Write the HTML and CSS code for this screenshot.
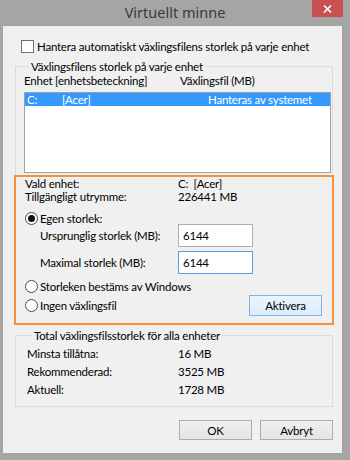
FILE: index.html
```html
<!DOCTYPE html>
<html lang="sv">
<head>
    <meta charset="UTF-8">
    <title>Virtuellt minne</title>
    <link rel="stylesheet" href="styles.css">
</head>
<body>
    <div class="window">
        <div class="titlebar">
            <span class="title">Virtuellt minne</span>
            <button class="close" aria-label="Stäng">
                <svg width="9" height="8" viewBox="0 0 9 8"><path d="M1 0.5 L8 7.5 M8 0.5 L1 7.5" stroke="#fff" stroke-width="1.6"/></svg>
            </button>
        </div>

        <div class="client">
            <label class="check-row">
                <span class="checkbox"></span>
                Hantera automatiskt växlingsfilens storlek på varje enhet
            </label>

            <fieldset class="group group-drives">
                <legend>Växlingsfilens storlek på varje enhet</legend>
                <div class="list-head">
                    <span class="col-drive">Enhet [enhetsbeteckning]</span>
                    <span>Växlingsfil (MB)</span>
                </div>
                <div class="listbox">
                    <div class="list-row selected">
                        <span class="col-letter">C:</span>
                        <span class="col-name">[Acer]</span>
                        <span>Hanteras av systemet</span>
                    </div>
                </div>
            </fieldset>

            <div class="focus-box">
                <div class="info-row first">
                    <span class="info-label">Vald enhet:</span>
                    <span>C:&nbsp; [Acer]</span>
                </div>
                <div class="info-row">
                    <span class="info-label">Tillgängligt utrymme:</span>
                    <span>226441 MB</span>
                </div>

                <label class="radio-row custom">
                    <span class="radio checked"></span>
                    Egen storlek:
                </label>
                <div class="field-row">
                    <span class="field-label">Ursprunglig storlek (MB):</span>
                    <span class="textbox">6144</span>
                </div>
                <div class="field-row second">
                    <span class="field-label">Maximal storlek (MB):</span>
                    <span class="textbox focused">6144</span>
                </div>

                <div class="options">
                    <div class="option-list">
                        <label class="radio-row">
                            <span class="radio"></span>
                            Storleken bestäms av Windows
                        </label>
                        <label class="radio-row">
                            <span class="radio"></span>
                            Ingen växlingsfil
                        </label>
                    </div>
                    <button class="btn btn-default">Aktivera</button>
                </div>
            </div>

            <fieldset class="group group-total">
                <legend>Total växlingsfilsstorlek för alla enheter</legend>
                <div class="total-row">
                    <span class="info-label">Minsta tillåtna:</span>
                    <span>16 MB</span>
                </div>
                <div class="total-row">
                    <span class="info-label">Rekommenderad:</span>
                    <span>3525 MB</span>
                </div>
                <div class="total-row">
                    <span class="info-label">Aktuell:</span>
                    <span>1728 MB</span>
                </div>
            </fieldset>

            <div class="dialog-buttons">
                <button class="btn">OK</button>
                <button class="btn">Avbryt</button>
            </div>
        </div>
    </div>
</body>
</html>
```

FILE: styles.css
```css
body {
    margin: 0;
    width: 350px;
    height: 460px;
    overflow: hidden;
    background-color: #a5a5a5;
    font-family: Lato, "Noto Sans", sans-serif;
    font-size: 11.5px;
    letter-spacing: -0.22px;
    color: #000;
}

.window {
    display: flex;
    flex-direction: column;
    height: 460px;
}

.titlebar {
    position: relative;
    height: 26px;
    text-align: center;
}

.title {
    display: inline-block;
    margin-top: 2px;
    font-family: "Noto Sans", sans-serif;
    font-size: 14.5px;
    letter-spacing: 0;
    line-height: 20px;
    color: #3a3a3a;
}

.close {
    position: absolute;
    top: 0;
    right: 7px;
    width: 31px;
    height: 17px;
    padding: 0;
    border: none;
    background-color: #c75050;
    display: flex;
    align-items: center;
    justify-content: center;
}

.client {
    height: 427px;
    margin: 0 8px 0 3px;
    padding: 0 9px 0 12px;
    background-color: #f0f0f0;
    box-sizing: border-box;
}

/* checkbox + radios */
.check-row {
    display: flex;
    align-items: center;
    gap: 3px;
    height: 13px;
    margin: 14px 0 0 6px;
    white-space: nowrap;
}

.checkbox {
    width: 11px;
    height: 11px;
    border: 1px solid #707070;
    background-color: #fff;
}

.radio-row {
    display: flex;
    align-items: center;
    gap: 2px;
    height: 13px;
    padding-left: 9px;
    white-space: nowrap;
}

.radio {
    position: relative;
    width: 11px;
    height: 11px;
    border: 1px solid #4a4a4a;
    border-radius: 50%;
    background-color: #fff;
}

.radio.checked::after {
    content: "";
    position: absolute;
    left: 2px;
    top: 2px;
    width: 7px;
    height: 7px;
    border-radius: 50%;
    background-color: #111;
}

/* group boxes */
.group {
    margin: 0;
    min-inline-size: 0;
    border: 1px solid #dcdcdc;
}

.group legend {
    margin-left: 5px;
    padding: 0 2px;
    line-height: 15px;
}

.group-drives {
    margin-top: 6px;
    padding: 0 1px 2px 8px;
    border-bottom: none;
}

.list-head {
    display: flex;
    height: 14px;
    line-height: 14px;
}

.col-drive {
    width: 156px;
}

.listbox {
    height: 81px;
    margin-top: 4px;
    border: 1px solid #a0a0a0;
    background-color: #fff;
    box-sizing: border-box;
}

.list-row {
    display: flex;
    height: 13px;
    line-height: 13px;
    padding-left: 2px;
}

.list-row.selected {
    background-color: #3399ff;
    color: #fff;
}

.col-letter {
    width: 35px;
}

.col-name {
    width: 146px;
}

/* highlighted section */
.focus-box {
    margin-left: -1px;
    width: 320px;
    height: 150px;
    border: 2px solid #f7923a;
    box-sizing: border-box;
}

.info-row {
    display: flex;
    height: 14px;
    line-height: 14px;
    padding-left: 9px;
}

.info-row.first {
    height: 13px;
    line-height: 13px;
}

.info-label {
    width: 153px;
    flex-shrink: 0;
}

.radio-row.custom {
    height: 11px;
    margin-top: 9px;
}

.field-row {
    display: flex;
    align-items: center;
    height: 22px;
    padding-left: 24px;
}

.field-row.second {
    margin-top: 5px;
}

.field-label {
    width: 138px;
}

.textbox {
    width: 75px;
    height: 23px;
    padding-left: 4px;
    line-height: 21px;
    border: 1px solid #abadb3;
    background-color: #fff;
    box-sizing: border-box;
}

.textbox.focused {
    border-color: #569de5;
}

.options {
    display: flex;
    justify-content: space-between;
    height: 48px;
}

.option-list {
    display: flex;
    flex-direction: column;
    gap: 6px;
    padding-top: 7px;
}

/* buttons */
.btn {
    width: 73px;
    height: 21px;
    padding: 0;
    font: inherit;
    letter-spacing: inherit;
    color: #000;
    border: 1px solid #adadad;
    background: linear-gradient(#f0f0f0, #e5e5e5);
}

.btn-default {
    align-self: flex-end;
    margin: 0 10px 5px 0;
    border-color: #7eb4ea;
    background: linear-gradient(#ecf4fc, #dcecfc);
}

.group-total {
    margin-top: 3px;
    padding: 2px 0 7px 11px;
}

.total-row {
    display: flex;
    height: 18px;
    line-height: 18px;
}

.total-row .info-label {
    width: 151px;
}

.dialog-buttons {
    display: flex;
    justify-content: flex-end;
    gap: 8px;
    margin-top: 13px;
}

.dialog-buttons .btn {
    height: 20px;
}
```
